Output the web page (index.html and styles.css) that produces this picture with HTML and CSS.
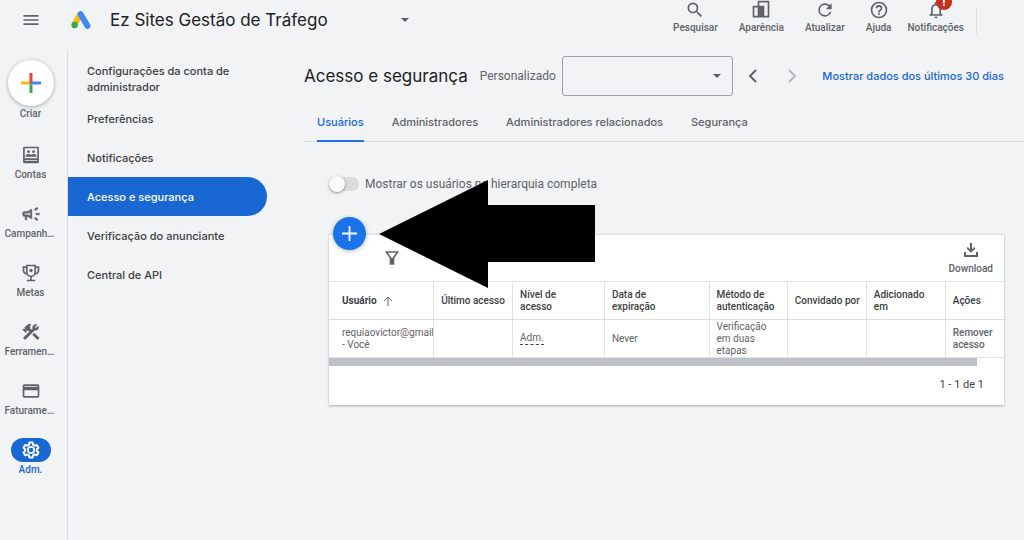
FILE: index.html
```html
<!DOCTYPE html>
<html lang="pt-BR">
<head>
  <meta charset="UTF-8">
  <meta name="viewport" content="width=device-width, initial-scale=1.0">
  <title>Acesso e segurança</title>
  <link rel="stylesheet" href="styles.css">
</head>
<body>
  <header class="topbar">
    <button class="menu-btn" aria-label="Menu">
      <svg width="20" height="20" viewBox="0 0 24 24"><path d="M3 18h18v-2H3v2zm0-5h18v-2H3v2zm0-7v2h18V6H3z"/></svg>
    </button>
    <svg class="logo" width="20" height="18" viewBox="0 0 20 18">
      <path d="M9.2 3.2L3.6 13.4" stroke="#fbbc04" stroke-width="6"/>
      <path d="M9.6 3.2l6.8 11.6" stroke="#4285f4" stroke-width="6" stroke-linecap="round"/>
      <circle cx="3.6" cy="14" r="3.2" fill="#34a853"/>
    </svg>
    <button class="account">
      <span>Ez Sites Gestão de Tráfego</span>
      <svg width="8" height="4" viewBox="0 0 8 4"><path d="M0 0l4 4 4-4z"/></svg>
    </button>
    <div class="tools">
      <button class="tool">
        <svg width="20" height="20" viewBox="0 0 24 24"><path d="M15.5 14h-.79l-.28-.27A6.47 6.47 0 0 0 16 9.500 6.500 6.500 0 1 0 9.500 16c1.610 0 3.090-.59 4.230-1.570l.27.28v.79l5 4.990L20.490 19l-4.990-5zm-6 0C7.010 14 5 11.990 5 9.500S7.010 5 9.500 5 14 7.010 14 9.500 11.990 14 9.500 14z"/></svg>
        Pesquisar
      </button>
      <button class="tool">
        <svg width="20" height="20" viewBox="0 0 24 24"><path d="M2 7h6V1h14v20H2V7zm2 2v10h4V9H4zm12 10h4V3h-10v4h6v12z" fill-rule="evenodd"/></svg>
        Aparência
      </button>
      <button class="tool">
        <svg width="20" height="20" viewBox="0 0 24 24"><path d="M17.650 6.350A7.960 7.960 0 0 0 12 4a8 8 0 1 0 7.730 10h-2.080A6 6 0 1 1 12 6c1.660 0 3.140.69 4.220 1.780L13 11h7V4l-2.350 2.350z"/></svg>
        Atualizar
      </button>
      <button class="tool">
        <svg width="20" height="20" viewBox="0 0 24 24"><path d="M11 18h2v-2h-2v2zm1-16a10 10 0 1 0 0 20 10 10 0 0 0 0-20zm0 18a8 8 0 1 1 0-16 8 8 0 0 1 0 16zm0-14a4 4 0 0 0-4 4h2a2 2 0 1 1 4 0c0 2-3 1.750-3 5h2c0-2.250 3-2.500 3-5a4 4 0 0 0-4-4z"/></svg>
        Ajuda
      </button>
      <button class="tool tool-bell">
        <svg width="20" height="20" viewBox="0 0 24 24"><path d="M12 22a2 2 0 0 0 2-2h-4a2 2 0 0 0 2 2zm6-6v-5c0-3.070-1.630-5.640-4.500-6.320V4a1.500 1.500 0 0 0-3 0v.68C7.640 5.360 6 7.920 6 11v5l-2 2v1h16v-1l-2-2zm-2 1H8v-6c0-2.480 1.510-4.500 4-4.500s4 2.020 4 4.500v6z"/></svg>
        Notificações
        <span class="badge">!</span>
      </button>
    </div>
  </header>

  <div class="layout">
    <nav class="rail">
      <a class="rail-item create" href="#">
        <span class="create-circle">
          <svg width="20" height="20" viewBox="0 0 20 20">
            <path d="M0 8.500h8.500v3H0z" fill="#fbbc04"/>
            <path d="M8.500 11.500h3V20h-3z" fill="#34a853"/>
            <path d="M10 8.500h10v3H8.500z" fill="#4285f4"/>
            <path d="M8.500 0h3v8.500l-3 3z" fill="#ea4335"/>
          </svg>
        </span>
        <span class="rail-label">Criar</span>
      </a>
      <a class="rail-item" href="#">
        <span class="rail-icon"><svg width="20" height="20" viewBox="0 0 24 24"><path d="M4 2h16a1.500 1.500 0 0 1 1.500 1.500v17A1.500 1.500 0 0 1 20 22H4a1.500 1.500 0 0 1-1.500-1.500v-17A1.500 1.500 0 0 1 4 2zm.5 2v12h15V4h-15zm0 14v.8h15V18h-15z" fill-rule="evenodd"/><circle cx="9" cy="8" r="1.700"/><circle cx="15" cy="8" r="1.700"/><path d="M5.500 14v-1c0-1.500 2-2.300 3.500-2.300 1 0 2.200.4 3 1 .8-.6 2-1 3-1 1.500 0 3.500.8 3.500 2.300v1z"/></svg></span>
        <span class="rail-label">Contas</span>
      </a>
      <a class="rail-item" href="#">
        <span class="rail-icon"><svg width="20" height="20" viewBox="0 0 24 24"><path d="M18 11v2h4v-2h-4zm-2 6.610c.96.71 2.210 1.650 3.200 2.390.4-.53.8-1.070 1.200-1.600-.99-.74-2.240-1.680-3.200-2.400-.4.540-.8 1.080-1.200 1.610zM20.400 5.600c-.4-.53-.8-1.070-1.200-1.600-.99.740-2.240 1.680-3.200 2.400.4.530.8 1.070 1.200 1.600.96-.72 2.210-1.650 3.200-2.400zM4 9a2 2 0 0 0-2 2v2a2 2 0 0 0 2 2h1v4h2v-4h1l5 3V6L8 9H4zm5.030 1.710L11 9.530v4.940l-1.970-1.180-.48-.29H4v-2h4.550l.48-.29z" stroke="#5f6368" stroke-width=".6"/></svg></span>
        <span class="rail-label">Campanhas</span>
      </a>
      <a class="rail-item" href="#">
        <span class="rail-icon"><svg width="20" height="20" viewBox="0 0 24 24"><path d="M6 2h12v2h4v5c0 2.600-1.900 4.600-4.500 4.900A6 6 0 0 1 13 16.900V20h4v2H7v-2h4v-3.100a6 6 0 0 1-4.500-3C3.900 13.600 2 11.600 2 9V4h4V2zm2 2v7a4 4 0 0 0 8 0V4H8zM4 6v3c0 1.200.8 2.300 2 2.700V6H4zm14 0v5.700c1.200-.4 2-1.500 2-2.700V6h-2z" fill-rule="evenodd"/><circle cx="12" cy="9" r="2"/></svg></span>
        <span class="rail-label">Metas</span>
      </a>
      <a class="rail-item" href="#">
        <span class="rail-icon"><svg width="20" height="20" viewBox="0 0 24 24"><path d="M13.780 15.170l2.120-2.120 6 6-2.120 2.120zM17.500 10c1.930 0 3.500-1.570 3.500-3.500 0-.58-.16-1.120-.41-1.600l-2.700 2.700-1.490-1.490 2.700-2.700C18.620 3.160 18.080 3 17.500 3 15.570 3 14 4.570 14 6.500c0 .41.080.8.210 1.160l-1.850 1.850-1.780-1.780.71-.71-1.410-1.410L12 3.490a3 3 0 0 0-4.240 0L4.220 7.030l1.410 1.410H2.810l-.71.71 3.540 3.540.71-.71V9.150l1.410 1.410.71-.71 1.780 1.780-7.410 7.410 2.120 2.120L16.340 9.790c.36.130.75.210 1.160.21z" stroke="#5f6368" stroke-width=".6"/></svg></span>
        <span class="rail-label">Ferramentas</span>
      </a>
      <a class="rail-item" href="#">
        <span class="rail-icon"><svg width="20" height="20" viewBox="0 0 24 24"><path d="M20 4H4a2 2 0 0 0-2 2v12c0 1.110.89 2 2 2h16a2 2 0 0 0 2-2V6a2 2 0 0 0-2-2zm0 14H4v-7h16v7zm0-11H4V6h16v1z"/></svg></span>
        <span class="rail-label">Faturamento</span>
      </a>
      <a class="rail-item active" href="#">
        <span class="rail-icon"><svg width="20" height="20" viewBox="0 0 24 24"><path d="M10 3h4l.5 2.700 1.900 1.100 2.600-.9 2 3.400-2 1.800v2l2 1.800-2 3.400-2.600-.9-1.900 1.100L14 21h-4l-.5-2.500-1.900-1.100-2.600.9-2-3.400 2-1.800v-2L3 9.300l2-3.400 2.600.9 1.900-1.100z" fill="none" stroke="#fff" stroke-width="2.400" stroke-linejoin="round"/><circle cx="12" cy="12" r="3.800" fill="none" stroke="#fff" stroke-width="2"/></svg></span>
        <span class="rail-label">Adm.</span>
      </a>
    </nav>

    <nav class="sidenav">
      <a href="#">Configurações da conta de administrador</a>
      <a href="#">Preferências</a>
      <a href="#">Notificações</a>
      <a href="#" class="active">Acesso e segurança</a>
      <a href="#">Verificação do anunciante</a>
      <a href="#">Central de API</a>
    </nav>

    <main class="main">
      <div class="title-row">
        <h1>Acesso e segurança</h1>
        <label for="period">Personalizado</label>
        <div class="select-wrap">
          <select id="period"><option></option></select>
          <svg width="8" height="4" viewBox="0 0 8 4"><path d="M0 0l4 4 4-4z"/></svg>
        </div>
        <button class="step" aria-label="Anterior"><svg width="24" height="24" viewBox="0 0 24 24"><path d="M15 6l-6 6 6 6"/></svg></button>
        <button class="step" aria-label="Próximo" disabled><svg width="24" height="24" viewBox="0 0 24 24"><path d="M9 6l6 6-6 6"/></svg></button>
        <a class="last-days" href="#">Mostrar dados dos últimos 30 dias</a>
      </div>

      <nav class="tabs">
        <a href="#" class="active">Usuários</a>
        <a href="#">Administradores</a>
        <a href="#">Administradores relacionados</a>
        <a href="#">Segurança</a>
      </nav>

      <div class="content">
        <label class="toggle">
          <input type="checkbox">
          <span>Mostrar os usuários na hierarquia completa</span>
        </label>

        <section class="card">
          <button class="fab" aria-label="Adicionar usuário"><svg width="15" height="15" viewBox="0 0 15 15"><path d="M6.600 0h1.800v6.600H15v1.800H8.400V15H6.600V8.400H0V6.600h6.600z"/></svg></button>
          <div class="card-tools">
            <button class="filter" aria-label="Filtrar"><svg width="14" height="14" viewBox="0 0 14 14"><path d="M1.500 1h11L8.500 7v6h-3V7z" fill="none" stroke="#5f6368" stroke-width="1.700"/><path d="M5.500 7h3v6h-3z"/></svg></button>
            <button class="download">
              <svg width="16" height="16" viewBox="0 0 16 16"><path d="M7 1h2v6.200l2.200-2.200 1.300 1.300L8 10.800 3.500 6.300 4.800 5 7 7.200zM1 10h2v3h10v-3h2v5H1z"/></svg>
              Download
            </button>
          </div>
          <div class="table-wrap">
            <table>
              <thead>
                <tr>
                  <th class="col-user"><span class="sort">Usuário <svg width="10" height="10" viewBox="0 0 10 10"><path d="M5 10V1M1 5l4-4 4 4"/></svg></span></th>
                  <th class="col-last">Último acesso</th>
                  <th class="col-level">Nível de<br>acesso</th>
                  <th class="col-date">Data de<br>expiração</th>
                  <th class="col-auth">Método de<br>autenticação</th>
                  <th class="col-by">Convidado por</th>
                  <th class="col-added">Adicionado<br>em</th>
                  <th class="col-actions">Ações</th>
                </tr>
              </thead>
              <tbody>
                <tr>
                  <td class="col-user">requiaovictor@gmail<br>- Você</td>
                  <td></td>
                  <td><button class="level">Adm.</button></td>
                  <td>Never</td>
                  <td>Verificação<br>em duas<br>etapas</td>
                  <td></td>
                  <td></td>
                  <td><button class="remove">Remover acesso</button></td>
                </tr>
              </tbody>
            </table>
            <div class="scrollbar"></div>
          </div>
          <div class="pager">1 - 1 de 1</div>
          <svg class="arrow" width="216" height="108" viewBox="0 0 216 108"><path d="M0 54L109 0v25h107v57H109v26z"/></svg>
        </section>
      </div>
    </main>
  </div>
</body>
</html>
```

FILE: styles.css
```css
* {
  box-sizing: border-box;
}
body {
  margin: 0;
  min-height: 100vh;
  display: flex;
  flex-direction: column;
  background-color: #f1f3f4;
  color: #3c4043;
  font-family: Roboto, sans-serif;
  font-size: 10px;
  line-height: 12px;
}
button {
  border: none;
  padding: 0;
  background: none;
  font: inherit;
  color: inherit;
  cursor: pointer;
}
a {
  color: inherit;
  text-decoration: none;
}
svg {
  display: block;
  flex: none;
  fill: #5f6368;
}

/* top bar */
.topbar {
  display: flex;
  align-items: center;
  height: 40px;
  margin-bottom: 10px;
  padding-left: 21px;
}
.logo {
  margin: 0 19px 0 30px;
  fill: none;
}
.account {
  display: flex;
  align-items: center;
  gap: 73px;
  font-family: Inter, sans-serif;
  font-size: 17px;
  line-height: 24px;
  color: #202124;
}
.tools {
  display: flex;
  gap: 21px;
  align-self: flex-start;
  margin: 0 47px 0 auto;
  padding-right: 13px;
  background: linear-gradient(#dadce0, #dadce0) right bottom / 1px 26px no-repeat;
}
.tool {
  position: relative;
  display: flex;
  flex-direction: column;
  align-items: center;
  gap: 2px;
  font-weight: 500;
  color: #5f6368;
}
.tool-bell {
  margin-left: -5px;
}
.badge {
  position: absolute;
  top: -6px;
  left: 50%;
  width: 16px;
  height: 16px;
  border-radius: 50%;
  background-color: #c5311f;
  color: #fff;
  font-size: 12px;
  line-height: 16px;
  font-weight: 700;
}

/* left rail */
.layout {
  display: flex;
  flex: 1;
}
.rail {
  width: 68px;
  flex: none;
  padding-top: 10px;
  border-right: 1px solid #dadce0;
}
.rail-item {
  display: flex;
  flex-direction: column;
  align-items: center;
  width: 61px;
  margin-bottom: 19px;
  color: #5f6368;
}
.rail-icon {
  display: flex;
  align-items: center;
  justify-content: center;
  width: 40px;
  height: 24px;
  border-radius: 12px;
}
.rail-label {
  max-width: 52px;
  overflow: hidden;
  white-space: nowrap;
  text-overflow: ellipsis;
  font-weight: 500;
  line-height: 16px;
}
.rail-item.create {
  margin-bottom: 21px;
}
.create-circle {
  display: flex;
  align-items: center;
  justify-content: center;
  width: 46px;
  height: 46px;
  border-radius: 50%;
  background-color: #fff;
  box-shadow: 0 1px 4px rgba(60, 64, 67, 0.4);
}
.rail-item.active {
  color: #1967d2;
}
.rail-item.active .rail-icon {
  background-color: #1967d2;
}

/* section menu */
.sidenav {
  width: 199px;
  flex: none;
  padding-top: 9px;
}
.sidenav a {
  display: flex;
  align-items: center;
  min-height: 39px;
  padding: 4px 19px;
  font-family: Inter, sans-serif;
  font-size: 11px;
  line-height: 16px;
  font-weight: 500;
}
.sidenav a.active {
  border-radius: 0 20px 20px 0;
  background-color: #1967d2;
  color: #fff;
}

/* main */
.main {
  flex: 1;
  min-width: 0;
  padding: 6px 0 0 37px;
}
.title-row {
  display: flex;
  align-items: center;
  height: 40px;
  padding-right: 20px;
}
h1 {
  margin: 0 12px 0 0;
  font-family: Inter, sans-serif;
  font-size: 17px;
  line-height: 24px;
  font-weight: 400;
  color: #202124;
  white-space: nowrap;
}
.title-row label {
  font-size: 12px;
  color: #5f6368;
}
.select-wrap {
  position: relative;
  flex: 1;
  margin: 0 8px 0 6px;
}
.select-wrap select {
  display: block;
  width: 100%;
  height: 40px;
  appearance: none;
  border: 1px solid #9aa0a6;
  border-radius: 3px;
  background-color: transparent;
}
.select-wrap svg {
  position: absolute;
  top: 18px;
  right: 12px;
}
.step {
  margin-right: 15px;
}
.step svg {
  fill: none;
  stroke: #5f6368;
  stroke-width: 2;
}
.step:disabled svg {
  stroke: #b4b8bc;
}
.last-days {
  margin-left: 3px;
  font-family: Inter, sans-serif;
  font-size: 11px;
  font-weight: 500;
  color: #1967d2;
  white-space: nowrap;
}
.tabs {
  display: flex;
  gap: 28px;
  padding: 0 13px;
  border-bottom: 1px solid #dadce0;
}
.tabs a {
  padding: 18px 0 10px;
  font-family: Inter, sans-serif;
  font-size: 11px;
  line-height: 16px;
  font-weight: 500;
  color: #5f6368;
  border-bottom: 2px solid transparent;
  margin-bottom: -1px;
}
.tabs a.active {
  color: #1967d2;
  border-bottom-color: #1a73e8;
}
.content {
  padding: 34px 20px 0 25px;
}
.toggle {
  display: flex;
  align-items: center;
  gap: 6px;
  height: 16px;
  font-size: 12px;
  color: #5f6368;
}
.toggle input {
  appearance: none;
  position: relative;
  width: 30px;
  height: 14px;
  margin: 0;
  border-radius: 7px;
  background-color: #dadce0;
}
.toggle input::before {
  content: "";
  position: absolute;
  top: -1px;
  left: 0;
  width: 16px;
  height: 16px;
  border-radius: 50%;
  background-color: #fafafa;
  box-shadow: 0 1px 3px rgba(0, 0, 0, 0.4);
}
.toggle input:checked::before {
  left: 14px;
}

/* users table */
.card {
  position: relative;
  margin-top: 42px;
  background-color: #fff;
  border-top: 1px solid #e0e2e5;
  box-shadow: 0 1px 2px rgba(60, 64, 67, 0.4);
}
.fab {
  position: absolute;
  top: -18px;
  left: 4px;
  display: flex;
  align-items: center;
  justify-content: center;
  width: 33px;
  height: 33px;
  border-radius: 50%;
  background-color: #1a73e8;
  box-shadow: 0 1px 4px rgba(60, 64, 67, 0.4);
}
.fab svg {
  fill: #fff;
}
.card-tools {
  display: flex;
  align-items: center;
  justify-content: space-between;
  height: 46px;
  padding: 0 11px 0 56px;
}
.download {
  display: flex;
  flex-direction: column;
  align-items: center;
  gap: 5px;
  font-weight: 500;
  color: #5f6368;
}
table {
  width: 100%;
  table-layout: fixed;
  border-collapse: collapse;
}
th,
td {
  height: 38px;
  padding: 0 0 0 7px;
  border: 1px solid #e0e2e5;
  text-align: left;
  white-space: nowrap;
}
th {
  font-weight: 500;
  border-bottom: 1px solid #dadce0;
}
td {
  color: #5f6368;
}
th:first-child,
td:first-child {
  border-left: none;
}
th:last-child,
td:last-child {
  border-right: none;
}
.col-user {
  width: 15.5%;
  padding-left: 13px;
  overflow: hidden;
}
th.col-user {
  font-weight: 700;
}
.col-last,
.col-by,
.col-added {
  width: 11.7%;
}
.col-level {
  width: 13.6%;
}
.col-date {
  width: 15.5%;
}
.col-auth {
  width: 11.6%;
}
.sort {
  display: flex;
  align-items: center;
  gap: 6px;
}
.sort svg {
  fill: none;
  stroke: #5f6368;
}
.level {
  border-bottom: 1px dashed #3c4043;
}
.remove {
  font-weight: 500;
  color: #5f6368;
  text-align: left;
  white-space: normal;
}
.scrollbar {
  width: 96%;
  height: 8px;
  background-color: #bdc1c6;
}
.pager {
  padding: 11px 20px 12px 0;
  font-size: 11px;
  line-height: 16px;
  text-align: right;
}

/* pointer to the add button */
.arrow {
  position: absolute;
  top: -55px;
  left: 50px;
  fill: #000;
}
```
